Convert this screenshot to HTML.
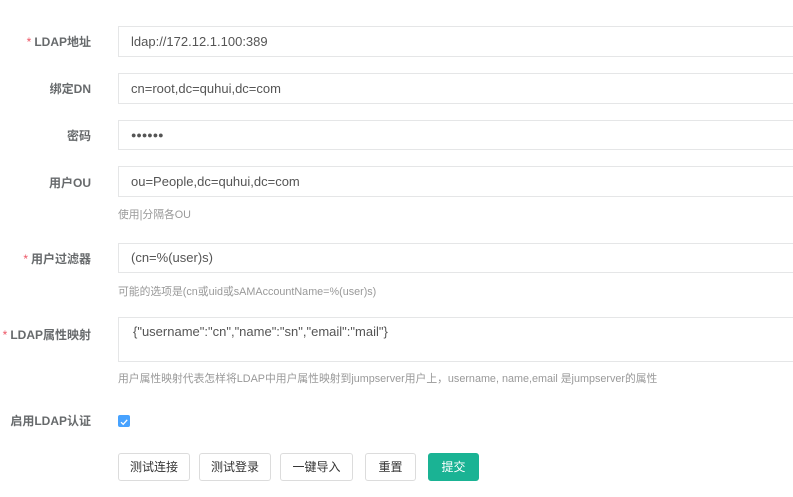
<!DOCTYPE html>
<html><head><meta charset="utf-8"><style>
body{margin:0;width:793px;height:497px;background:#fff;position:relative;overflow:hidden;font-family:"Liberation Sans","Noto Sans CJK SC",sans-serif;}
.l{position:absolute;right:702px;font-size:12px;font-weight:bold;color:#676a6c;white-space:nowrap;}
.l i{font-style:normal;color:#ed5565;font-weight:normal;margin-right:3px;}
.in{position:absolute;left:118px;width:690px;border:1px solid #e5e6e7;box-sizing:border-box;font-size:13px;color:#555;padding-left:12px;}
.h{position:absolute;left:118px;font-size:10.8px;color:#999;white-space:nowrap;}
.b{position:absolute;top:453px;height:28px;box-sizing:border-box;border:1px solid #dcdcdc;border-radius:3px;font-size:12px;color:#333;text-align:center;line-height:26px;}
</style></head><body>
<div class="l" style="top:33px"><i>*</i>LDAP地址</div>
<div class="in" style="top:26px;height:31px;line-height:29px">ldap://172.12.1.100:389</div>
<div class="l" style="top:80px">绑定DN</div>
<div class="in" style="top:73px;height:31px;line-height:29px">cn=root,dc=quhui,dc=com</div>
<div class="l" style="top:127px">密码</div>
<div class="in" style="top:120px;height:30px;line-height:28px;font-size:9px;">●●●●●●</div>
<div class="l" style="top:174px">用户OU</div>
<div class="in" style="top:166px;height:31px;line-height:29px">ou=People,dc=quhui,dc=com</div>
<div class="h" style="top:206px">使用|分隔各OU</div>
<div class="l" style="top:250px"><i>*</i>用户过滤器</div>
<div class="in" style="top:243px;height:30px;line-height:28px">(cn=%(user)s)</div>
<div class="h" style="top:283px">可能的选项是(cn或uid或sAMAccountName=%(user)s)</div>
<div class="l" style="top:326px"><i>*</i>LDAP属性映射</div>
<div class="in" style="top:317px;height:45px;line-height:13px;padding-top:7px;padding-left:14px">{"username":"cn","name":"sn","email":"mail"}</div>
<div class="h" style="top:370px">用户属性映射代表怎样将LDAP中用户属性映射到jumpserver用户上，username, name,email 是jumpserver的属性</div>
<div class="l" style="top:412px">启用LDAP认证</div>
<div style="position:absolute;left:118px;top:415px;width:12px;height:12px;background:#1a8cff;border-radius:2px;opacity:.8"><svg width="12" height="12"><path d="M3 6.2L5.2 8.3L9.2 3.8" stroke="#fff" stroke-width="1.3" fill="none"/></svg></div>
<div class="b" style="left:118px;width:72px">测试连接</div>
<div class="b" style="left:199px;width:72px">测试登录</div>
<div class="b" style="left:280px;width:73px">一键导入</div>
<div class="b" style="left:365px;width:51px">重置</div>
<div class="b" style="left:428px;width:51px;background:#1ab394;border-color:#1ab394;color:#fff">提交</div>
</body></html>
